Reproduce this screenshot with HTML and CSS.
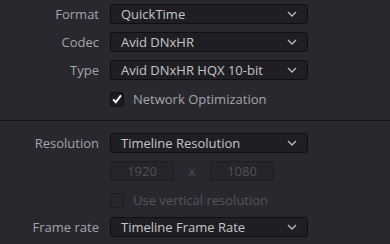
FILE: index.html
```html
<!DOCTYPE html>
<html lang="en">
<head>
    <meta charset="UTF-8">
    <title>Render Settings</title>
    <link rel="stylesheet" href="styles.css">
</head>
<body>
<div class="panel">
    <section class="group group-top">
        <div class="row">
            <label class="label">Format</label>
            <div class="select"><span>QuickTime</span><svg class="chev" width="10" height="6" viewBox="0 0 10 6"><path d="M1 1l4 4 4-4" fill="none" stroke="#b9b9bd" stroke-width="1.4"/></svg></div>
        </div>
        <div class="row">
            <label class="label">Codec</label>
            <div class="select"><span>Avid DNxHR</span><svg class="chev" width="10" height="6" viewBox="0 0 10 6"><path d="M1 1l4 4 4-4" fill="none" stroke="#b9b9bd" stroke-width="1.4"/></svg></div>
        </div>
        <div class="row">
            <label class="label">Type</label>
            <div class="select"><span>Avid DNxHR HQX 10-bit</span><svg class="chev" width="10" height="6" viewBox="0 0 10 6"><path d="M1 1l4 4 4-4" fill="none" stroke="#b9b9bd" stroke-width="1.4"/></svg></div>
        </div>
        <div class="row check-row">
            <span></span>
            <div class="check">
                <span class="box checked"><svg width="12" height="12" viewBox="0 0 12 12"><path d="M2.2 6.4l2.6 2.8L10 2.4" fill="none" stroke="#ffffff" stroke-width="2"/></svg></span>
                <span class="check-text">Network Optimization</span>
            </div>
        </div>
    </section>
    <hr class="divider">
    <section class="group group-bottom">
        <div class="row">
            <label class="label">Resolution</label>
            <div class="select"><span>Timeline Resolution</span><svg class="chev" width="10" height="6" viewBox="0 0 10 6"><path d="M1 1l4 4 4-4" fill="none" stroke="#b9b9bd" stroke-width="1.4"/></svg></div>
        </div>
        <div class="row">
            <span></span>
            <div class="dims">
                <div class="num">1920</div>
                <span class="times">x</span>
                <div class="num">1080</div>
            </div>
        </div>
        <div class="row check-row">
            <span></span>
            <div class="check disabled">
                <span class="box"></span>
                <span class="check-text">Use vertical resolution</span>
            </div>
        </div>
        <div class="row last-row">
            <label class="label">Frame rate</label>
            <div class="select"><span>Timeline Frame Rate</span><svg class="chev" width="10" height="6" viewBox="0 0 10 6"><path d="M1 1l4 4 4-4" fill="none" stroke="#b9b9bd" stroke-width="1.4"/></svg></div>
        </div>
    </section>
</div>
</body>
</html>
```

FILE: styles.css
```css
body {
    margin: 0;
    background-color: #28282e;
    font-family: "Open Sans", "Noto Sans", sans-serif;
    font-size: 13px;
    color: #c9c9cc;
}

.panel {
    width: 390px;
    height: 244px;
    overflow: hidden;
}

.group {
    display: flex;
    flex-direction: column;
    gap: 8px;
}

.group-top {
    padding-top: 4px;
}

.group-bottom {
    padding-top: 12px;
}

.row {
    display: grid;
    grid-template-columns: 99px 198px;
    column-gap: 11px;
    align-items: center;
    height: 20px;
}

.check-row {
    margin-top: 2px;
    height: 15px;
}

.last-row {
    margin-top: 3px;
}

.label {
    text-align: right;
    color: #a3a5aa;
}

.select {
    box-sizing: border-box;
    height: 20px;
    display: flex;
    align-items: center;
    justify-content: space-between;
    padding: 0 10px 0 10px;
    background-color: #1f1f23;
    border: 1px solid #101012;
    border-radius: 3px;
    color: #c6c6c9;
}

.check {
    display: flex;
    align-items: center;
    gap: 9px;
}

.box {
    box-sizing: border-box;
    width: 14px;
    height: 15px;
    display: flex;
    align-items: center;
    justify-content: center;
    background-color: #1c1c20;
    border: 1px solid #121214;
    border-radius: 2px;
}

.check-text {
    color: #a3a5aa;
}

.check.disabled .box {
    background-color: #26262b;
    border-color: #1c1c20;
}

.check.disabled .check-text {
    color: #55565b;
}

.divider {
    margin: 15px 0 0 0;
    border: none;
    border-top: 1px solid #141416;
    height: 0;
}

.dims {
    display: flex;
    align-items: center;
}

.num {
    box-sizing: border-box;
    width: 64px;
    height: 20px;
    line-height: 18px;
    text-align: center;
    background-color: #25252a;
    border: 1px solid #1d1d21;
    border-radius: 3px;
    color: #505156;
}

.times {
    width: 36px;
    text-align: center;
    color: #505156;
}
```
